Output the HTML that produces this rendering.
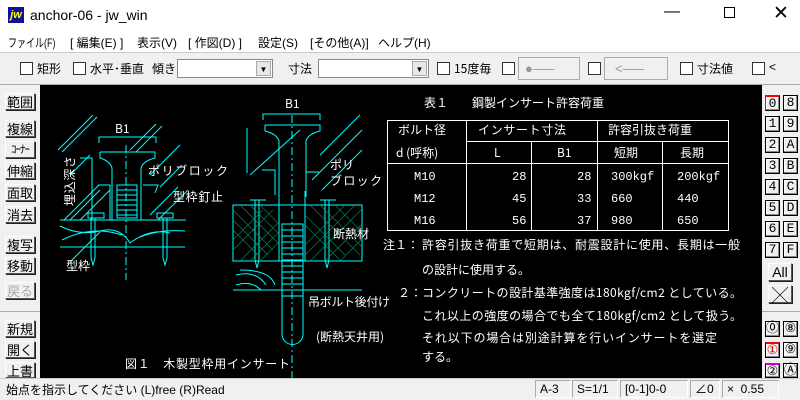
<!DOCTYPE html>
<html><head><meta charset="utf-8"><style>
*{margin:0;padding:0;box-sizing:border-box}
body{width:800px;height:400px;overflow:hidden;background:#f0f0f0;font-family:"Liberation Sans","Noto Sans CJK JP",sans-serif;font-size:12px;color:#000;position:relative}
.a{position:absolute;white-space:nowrap}
.m{position:absolute;white-space:nowrap;top:34px;font-family:"Liberation Sans","Noto Sans CJK JP",sans-serif;font-size:12px}
.cb{position:absolute;width:13px;height:13px;border:1px solid #333;background:#fff}
.btn{position:absolute;background:#f0f0f0;border:1px solid;border-color:#fff #555 #555 #fff;box-shadow:1px 1px 0 #222;font-size:13px;text-align:center;line-height:15px;font-family:"Noto Sans CJK JP",sans-serif}
.rb{position:absolute;width:15px;height:16px;background:#f0f0f0;border:1px solid #000;box-shadow:inset -1px -1px 0 #888,inset 1px 1px 0 #fff;font-family:"Liberation Mono",monospace;font-size:13px;text-align:center;line-height:14px}
.sp{position:absolute;top:380px;height:18px;border:1px solid;border-color:#aaa #fff #fff #aaa;font-size:12px;line-height:16px;padding-left:4px}
</style></head><body>
<div class="a" style="left:0;top:0;width:800px;height:30px;background:#fff"></div>
<div class="a" style="left:8px;top:7px;width:16px;height:16px;background:#1010a0;color:#ff0;font:bold italic 11px 'Liberation Sans';line-height:16px;text-align:center">jw</div>
<div class="a" style="left:30px;top:7px;font-size:14px">anchor-06 - jw_win</div>
<div class="a" style="left:664px;top:3px;font-size:16px">&#8212;</div>
<div class="a" style="left:724px;top:7px;width:11px;height:11px;border:1px solid #000"></div>
<div class="a" style="left:773px;top:2px;font-size:19px">&#x2715;</div>
<div class="a" style="left:0;top:30px;width:800px;height:22px;background:#fff"></div>
<div class="m" style="left:8px;transform:scaleX(0.75);transform-origin:left">ファイル(F)</div>
<div class="m" style="left:70px">[ 編集(E) ]</div>
<div class="m" style="left:137px">表示(V)</div>
<div class="m" style="left:188px">[ 作図(D) ]</div>
<div class="m" style="left:258px">設定(S)</div>
<div class="m" style="left:310px">[その他(A)]</div>
<div class="m" style="left:378px">ヘルプ(H)</div>
<div class="a" style="left:0;top:52px;width:800px;height:1px;background:#ccc"></div>
<div class="cb" style="left:20px;top:62px"></div><div class="a" style="left:37px;top:60px;font-family:'Noto Sans CJK JP'">矩形</div>
<div class="cb" style="left:73px;top:62px"></div><div class="a" style="left:90px;top:60px;font-family:'Noto Sans CJK JP'">水平･垂直</div>
<div class="a" style="left:152px;top:60px;font-family:'Noto Sans CJK JP'">傾き</div>
<div class="a" style="left:177px;top:59px;width:96px;height:19px;background:#fff;border:1px solid #888"></div>
<div class="a" style="left:256px;top:61px;width:15px;height:15px;background:#e8e8e8;border:1px solid #aaa;font-size:8px;text-align:center;line-height:15px">&#9660;</div>
<div class="a" style="left:288px;top:60px;font-family:'Noto Sans CJK JP'">寸法</div>
<div class="a" style="left:318px;top:59px;width:111px;height:19px;background:#fff;border:1px solid #888"></div>
<div class="a" style="left:412px;top:61px;width:15px;height:15px;background:#e8e8e8;border:1px solid #aaa;font-size:8px;text-align:center;line-height:15px">&#9660;</div>
<div class="cb" style="left:437px;top:62px"></div><div class="a" style="left:454px;top:60px;font-family:'Noto Sans CJK JP'">15度毎</div>
<div class="cb" style="left:502px;top:62px"></div>
<div class="a" style="left:518px;top:57px;width:62px;height:23px;border:1px solid #aaa;color:#999;font-size:13px;line-height:21px;padding-left:6px">&#9679;&#8211;&#8211;&#8211;</div>
<div class="cb" style="left:588px;top:62px"></div>
<div class="a" style="left:604px;top:57px;width:64px;height:23px;border:1px solid #aaa;color:#999;font-size:13px;line-height:21px;padding-left:10px">&lt;&#8211;&#8211;&#8211;</div>
<div class="cb" style="left:680px;top:62px"></div><div class="a" style="left:697px;top:60px;font-family:'Noto Sans CJK JP'">寸法値</div>
<div class="cb" style="left:752px;top:62px"></div><div class="a" style="left:769px;top:60px">&lt;</div>
<div class="a" style="left:0;top:84px;width:800px;height:1px;background:#aaa"></div>
<div class="btn" style="left:5px;top:93px;width:30px;height:17px">範囲</div>
<div class="btn" style="left:5px;top:120px;width:30px;height:17px">複線</div>
<div class="btn" style="left:5px;top:141px;width:30px;height:17px;font-size:11px;letter-spacing:-1px">ｺｰﾅｰ</div>
<div class="btn" style="left:5px;top:162px;width:30px;height:17px">伸縮</div>
<div class="btn" style="left:5px;top:184px;width:30px;height:17px">面取</div>
<div class="btn" style="left:5px;top:206px;width:30px;height:17px">消去</div>
<div class="btn" style="left:5px;top:236px;width:30px;height:17px">複写</div>
<div class="btn" style="left:5px;top:257px;width:30px;height:17px">移動</div>
<div class="btn" style="left:5px;top:282px;width:30px;height:17px;color:#aaa">戻る</div>
<div class="a" style="left:0;top:311px;width:40px;height:1px;background:#aaa"></div>
<div class="btn" style="left:5px;top:320px;width:30px;height:17px">新規</div>
<div class="btn" style="left:5px;top:341px;width:30px;height:17px">開く</div>
<div class="btn" style="left:5px;top:362px;width:30px;height:16px">上書</div>
<svg class="a" style="left:40px;top:85px" width="722" height="293" viewBox="40 85 722 293" xmlns="http://www.w3.org/2000/svg">
<rect x="40" y="85" width="722" height="293" fill="#000"/>
<g stroke="#0ff" fill="none" stroke-width="1">
<path d="M58,150l35,-35M62,152l35,-35M70,175l20,-20M130,150l26,-26M136,152l26,-26M150,175l30,-30M160,187l22,-22M64,220l35,-35M70,220l30,-30M80,220l30,-30M150,215l28,-28M158,220l30,-30"/>
<path d="M99,143v-6h57v6M100,152h55v6q-12,3-14,10v52M100,152v6q10,3,12,10v52M80,158h12v62"/>
<path d="M126,145v135" stroke-dasharray="8,3,2,3"/>
<path d="M60,220h126M60,247h125"/>
<path d="M117,185h20v33h-20zM117,190h20M117,195h20M117,200h20M117,205h20M117,210h20M117,215h20"/>
<path d="M98,185h12v35M143,185h15l-3,8M88,213h16v5h-16zM157,213h16v5h-16zM91,218v40l2,7l2,-7v-40M163,218v40l2,7l2,-7v-40"/>
<path d="M60,226q20,10 40,5t30,12q20,-15 40,-10M62,240q30,-15 60,-5M140,237q20,-8 45,-6M100,232l-30,30"/>
<path d="M263,120v-6h57v6M265,125h55v6q-12,3-14,10v50M265,125v6q12,3,14,10v50M279,191v70M305,191v70"/>
<path d="M292,115v265" stroke-dasharray="8,3,2,3"/>
<path d="M233,205h129M233,261h129M233,290h129M247,128v45M300,130l-50,45M360,115l-40,40M362,130l-50,50M362,150l-40,40M262,170h13v25M319,172h-13v25"/>
<path d="M233,205h46v56h-46zM305,205h57v56h-57z" />
<path d="M282,224h21v110a10,10 0 0 1 -21,0zM282,230h21M282,236h21M282,242h21M282,248h21M282,254h21M282,260h21M282,266h21M282,272h21M282,278h21M282,284h21M282,290h21M282,296h21"/>
<path d="M255,200v60l2,8l2,-8v-60M325,200v60l2,8l2,-8v-60M250,200h16M320,200h16"/>
<path d="M236,275q20,-5 30,10M236,285q15,-5 25,5M240,270q30,0 35,15"/>
</g>
<g stroke="#0a6" stroke-width="0.8" opacity="0.7">
<path d="M233,210l40,40M233,220l35,35M233,230l25,25M240,205l39,39M250,205l29,29M260,205l19,19M233,250l40,-40M233,240l30,-30M240,261l39,-39M250,261l29,-29M260,261l19,-19M305,215l40,40M305,225l35,35M310,205l50,50M320,205l42,42M335,205l27,27M305,255l50,-50M305,245l40,-40M310,261l52,-52M325,261l37,-37M340,261l22,-22"/>
</g>
<g fill="#fff" font-family="'Noto Sans CJK JP','WenQuanYi Zen Hei',sans-serif" font-size="12">
<text x="115" y="133">B1</text>
<text x="285" y="108">B1</text>
<text x="148" y="175" textLength="80">ポリブロック</text>
<text x="173" y="201" textLength="50">型枠釘止</text>
<text x="66" y="270">型枠</text>
<text x="74" y="206" transform="rotate(-90 74 206)" textLength="50">埋込深さ</text>
<text x="330" y="169">ポリ</text>
<text x="330" y="185" textLength="52">ブロック</text>
<text x="333" y="238">断熱材</text>
<text x="308" y="306" textLength="82">吊ボルト後付け</text>
<text x="316" y="341">(断熱天井用)</text>
<text x="125" y="368" textLength="165">図１　木製型枠用インサート</text>
<text x="424" y="107" textLength="180">表１　　鋼製インサート許容荷重</text>
<text x="398" y="134">ボルト径</text>
<text x="396" y="157">d (呼称)</text>
<text x="478" y="134" textLength="88">インサート寸法</text>
<text x="608" y="134">許容引抜き荷重</text>
<text x="494" y="157">L</text><text x="557" y="157">B1</text>
<text x="614" y="157">短期</text><text x="680" y="157">長期</text>
<g font-family="'Liberation Mono',monospace" font-size="12">
<text x="414" y="180">M10</text><text x="414" y="202">M12</text><text x="414" y="224">M16</text>
<text x="512" y="180">28</text><text x="512" y="202">45</text><text x="512" y="224">56</text>
<text x="577" y="180">28</text><text x="577" y="202">33</text><text x="577" y="224">37</text>
<text x="611" y="180">300kgf</text><text x="611" y="202">660</text><text x="611" y="224">980</text>
<text x="677" y="180">200kgf</text><text x="677" y="202">440</text><text x="677" y="224">650</text>
</g>
<text x="383" y="249">注１：</text>
<text x="422" y="249" textLength="318">許容引抜き荷重で短期は、耐震設計に使用、長期は一般</text>
<text x="422" y="274">の設計に使用する。</text>
<text x="398" y="297">２：</text>
<text x="422" y="297" textLength="320">コンクリートの設計基準強度は180kgf/cm2 としている。</text>
<text x="422" y="320" textLength="320">これ以上の強度の場合でも全て180kgf/cm2 として扱う。</text>
<text x="422" y="342" textLength="295">それ以下の場合は別途計算を行いインサートを選定</text>
<text x="422" y="361">する。</text>
</g>
<g stroke="#fff" fill="none">
<rect x="387.5" y="120.5" width="341" height="110"/>
<path d="M466.5,120v110M597.5,120v110M531.5,141v89M662.5,141v89M466,141.5h262M387,163.5h341"/>
</g>
</svg>
<div class="a" style="left:762px;top:85px;width:38px;height:293px;background:#f0f0f0"></div>
<div class="rb" style="left:765px;top:95px;border-top:2px solid red;border-left:1px solid red">0</div><div class="rb" style="left:783px;top:95px">8</div>
<div class="rb" style="left:765px;top:116px">1</div><div class="rb" style="left:783px;top:116px">9</div>
<div class="rb" style="left:765px;top:137px">2</div><div class="rb" style="left:783px;top:137px">A</div>
<div class="rb" style="left:765px;top:158px">3</div><div class="rb" style="left:783px;top:158px">B</div>
<div class="rb" style="left:765px;top:179px">4</div><div class="rb" style="left:783px;top:179px">C</div>
<div class="rb" style="left:765px;top:200px">5</div><div class="rb" style="left:783px;top:200px">D</div>
<div class="rb" style="left:765px;top:221px">6</div><div class="rb" style="left:783px;top:221px">E</div>
<div class="rb" style="left:765px;top:242px">7</div><div class="rb" style="left:783px;top:242px">F</div>
<div class="btn" style="left:768px;top:263px;width:24px;height:18px;font-family:'Liberation Sans';font-size:14px;line-height:17px">All</div>
<div class="btn" style="left:768px;top:285px;width:24px;height:18px;font-size:16px;line-height:17px">&#x2573;</div>
<div class="a" style="left:762px;top:311px;width:38px;height:1px;background:#aaa"></div>
<div class="rb" style="left:765px;top:321px">⓪</div><div class="rb" style="left:783px;top:321px">⑧</div>
<div class="rb" style="left:765px;top:342px;border-top:2px solid red;color:#d00">①</div><div class="rb" style="left:783px;top:342px">⑨</div>
<div class="rb" style="left:765px;top:363px;border-top:2px solid #c0c;height:15px">②</div><div class="rb" style="left:783px;top:363px;height:15px">Ⓐ</div>
<div class="a" style="left:0;top:378px;width:800px;height:22px;background:#f0f0f0;border-top:1px solid #ccc"></div>
<div class="a" style="left:6px;top:381px;font-family:'Liberation Sans','Noto Sans CJK JP';font-size:12px">始点を指示してください (L)free (R)Read</div>
<div class="sp" style="left:535px;width:36px">A-3</div>
<div class="sp" style="left:572px;width:46px">S=1/1</div>
<div class="sp" style="left:620px;width:68px">[0-1]0-0</div>
<div class="sp" style="left:690px;width:30px">∠0</div>
<div class="sp" style="left:722px;width:57px">×&nbsp; 0.55</div>
</body></html>
